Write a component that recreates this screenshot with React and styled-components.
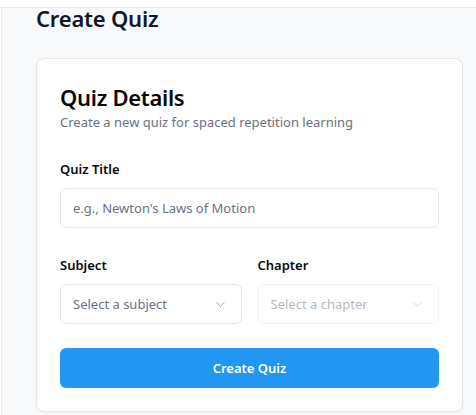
import styled, { createGlobalStyle } from "styled-components";
import { ChevronDown } from "lucide-react";

const GlobalStyle = createGlobalStyle`
  * { box-sizing: border-box; }
  body {
    margin: 0;
    background: #ffffff;
    font-family: "Noto Sans", "Open Sans", sans-serif;
    color: #0a0a0a;
  }
`;

const TopBar = styled.header`
  height: 8px;
  background: #ffffff;
  border-bottom: 1px solid #e9ebef;
`;

const Body = styled.div`
  display: flex;
  min-height: 407px;
`;

const SideEdge = styled.aside`
  width: 2px;
  background: #ffffff;
  border-right: 1px solid #e9ebef;
`;

const Main = styled.main`
  flex: 1;
  background: #f8f9fb;
  padding: 0 13px 0 34px;
`;

const PageTitle = styled.h1`
  margin: 0;
  font-size: 22px;
  line-height: 20px;
  font-weight: 600;
  color: #111827;
  letter-spacing: -0.2px;
`;

const Card = styled.section`
  margin-top: 30px;
  background: #ffffff;
  border: 1px solid #e5e7eb;
  border-radius: 8px;
  box-shadow: 0 1px 2px rgba(0, 0, 0, 0.05);
  padding: 23px 23px 23px;
`;

const CardTitle = styled.h2`
  margin: 0;
  font-size: 22px;
  line-height: 30px;
  font-weight: 600;
  letter-spacing: -0.3px;
`;

const CardDesc = styled.p`
  margin: 0;
  font-size: 13px;
  line-height: 20px;
  color: #6b7280;
`;

const Form = styled.form`
  margin-top: 27px;
  display: flex;
  flex-direction: column;
`;

const Field = styled.div`
  display: flex;
  flex-direction: column;
  gap: 9px;
`;

const Label = styled.label`
  font-size: 13px;
  line-height: 20px;
  font-weight: 600;
  color: #0a0a0a;
`;

const TextInput = styled.input`
  height: 40px;
  width: 100%;
  border: 1px solid #e5e7eb;
  border-radius: 6px;
  padding: 0 12px;
  font-family: inherit;
  font-size: 13px;
  color: #111827;
  background: #ffffff;
  outline: none;
  &::placeholder { color: #6b7280; }
`;

const Row = styled.div`
  margin-top: 27px;
  display: grid;
  grid-template-columns: 1fr 1fr;
  gap: 16px;
`;

const SelectBox = styled.button`
  height: 40px;
  width: 100%;
  display: flex;
  align-items: center;
  justify-content: space-between;
  border: 1px solid #e5e7eb;
  border-radius: 6px;
  padding: 0 13px 0 12px;
  background: #ffffff;
  font-family: inherit;
  font-size: 13px;
  color: #6b7280;
  opacity: ${(p) => (p.disabled ? 0.5 : 1)};
  cursor: ${(p) => (p.disabled ? "not-allowed" : "pointer")};
  svg { color: #9ca3af; }
`;

const SubmitButton = styled.button`
  margin-top: 24px;
  height: 40px;
  width: 100%;
  border: none;
  border-radius: 6px;
  background: #2196f3;
  color: #ffffff;
  font-family: inherit;
  font-size: 13px;
  font-weight: 600;
`;

function Select({ placeholder, disabled }) {
  return (
    <SelectBox type="button" disabled={disabled}>
      <span>{placeholder}</span>
      <ChevronDown size={15} strokeWidth={1.5} />
    </SelectBox>
  );
}

export default function App() {
  return (
    <>
      <GlobalStyle />
      <TopBar />
      <Body>
        <SideEdge />
        <Main>
          <PageTitle>Create Quiz</PageTitle>
          <Card>
            <CardTitle>Quiz Details</CardTitle>
            <CardDesc>Create a new quiz for spaced repetition learning</CardDesc>
            <Form onSubmit={(e) => e.preventDefault()}>
              <Field>
                <Label>Quiz Title</Label>
                <TextInput placeholder="e.g., Newton's Laws of Motion" />
              </Field>
              <Row>
                <Field>
                  <Label>Subject</Label>
                  <Select placeholder="Select a subject" />
                </Field>
                <Field>
                  <Label>Chapter</Label>
                  <Select placeholder="Select a chapter" disabled />
                </Field>
              </Row>
              <SubmitButton type="submit">Create Quiz</SubmitButton>
            </Form>
          </Card>
        </Main>
      </Body>
    </>
  );
}
